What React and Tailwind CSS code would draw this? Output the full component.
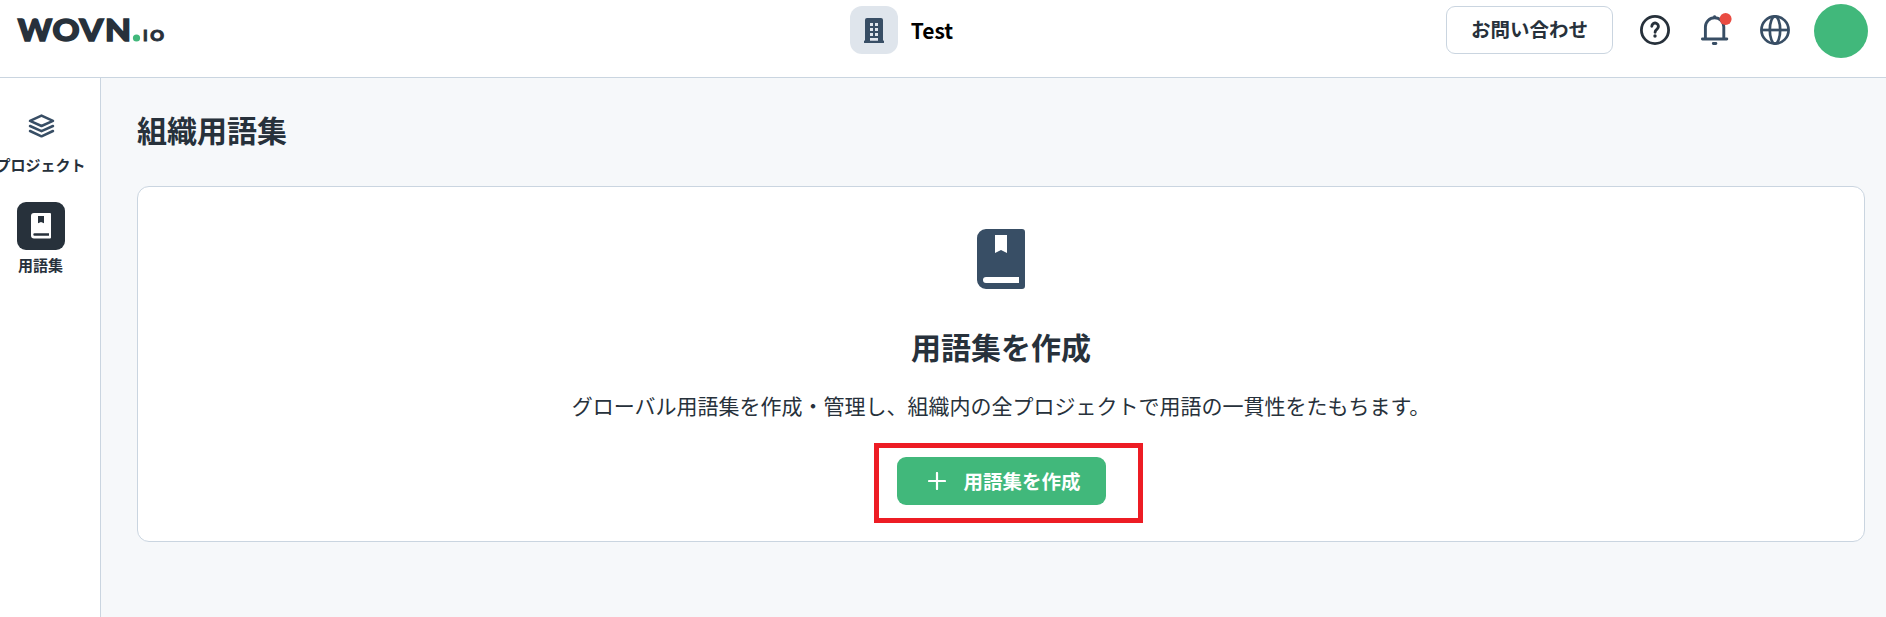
const cjk = 'font-["Noto_Sans_CJK_JP",sans-serif]'

function Logo() {
  return (
    <svg className="h-[60px] w-[170px] shrink-0" viewBox="0 0 170 60" fontFamily="Lato, sans-serif" fontWeight="900" fill="#27313b" stroke="#27313b">
      <g fontSize="30.3" strokeWidth="1.5">
        <text x="17.8" y="40.9" textLength="34.3" lengthAdjust="spacingAndGlyphs">W</text>
        <text x="52.4" y="40.9" textLength="27" lengthAdjust="spacingAndGlyphs">O</text>
        <text x="79.4" y="40.9" textLength="23.8" lengthAdjust="spacingAndGlyphs">V</text>
        <text x="105" y="40.9" textLength="26" lengthAdjust="spacingAndGlyphs">N</text>
      </g>
      <circle cx="136.5" cy="38" r="3.6" fill="#41b87b" stroke="none" />
      <g fontSize="15.5" strokeWidth="0.9">
        <text x="143.1" y="40.6">I</text>
        <text x="150.3" y="40.6" textLength="13.8" lengthAdjust="spacingAndGlyphs">O</text>
      </g>
    </svg>
  )
}

function BuildingIcon() {
  return (
    <svg className="h-[25px] w-5" viewBox="0 0 20 25" fill="#384e65">
      <path fillRule="evenodd" d="M3 0h14a2 2 0 0 1 2 2v20.5h.2a1.25 1.25 0 0 1 0 2.5H.8a1.25 1.25 0 0 1 0-2.5H1V2a2 2 0 0 1 2-2ZM6 5v3h3V5Zm5 0v3h3V5ZM6 10v3h3v-3Zm5 0v3h3v-3ZM6 15v3h3v-3Zm5 0v3h3v-3ZM6 20v2.7h8V20Z" />
    </svg>
  )
}

function HelpIcon() {
  return (
    <svg className="size-[30px]" viewBox="0 0 30 30" fill="none" stroke="#27313b" strokeLinecap="round" strokeLinejoin="round">
      <circle cx="15" cy="15" r="13.6" strokeWidth="2.8" />
      <path d="M11.8 11.3a3.3 3.3 0 1 1 5.3 2.7c-1.3 1-2 1.5-2 3.2" strokeWidth="2.9" />
      <circle cx="15" cy="21" r="1.7" fill="#27313b" stroke="none" />
    </svg>
  )
}

function BellIcon() {
  return (
    <svg className="h-[32px] w-[32px]" viewBox="0 0 32 32" fill="none" stroke="#384e65" strokeWidth="2.9" strokeLinecap="round">
      <path d="M2.4 26h24.4" />
      <path d="M5.4 25.5V14a9.2 9.2 0 0 1 18.4 0v11.5" />
      <path d="M14.6 3.6v1M13.3 30.5h2.6" />
      <circle cx="25.6" cy="6" r="6" fill="#e94b42" stroke="none" />
    </svg>
  )
}

function GlobeIcon() {
  return (
    <svg className="size-[30px]" viewBox="0 0 30 30" fill="none" stroke="#384e65" strokeWidth="2.7">
      <circle cx="15" cy="15" r="13.6" />
      <ellipse cx="15" cy="15" rx="5.2" ry="13.6" />
      <path d="M1 15h28" />
    </svg>
  )
}

function LayersIcon() {
  return (
    <svg className="h-[24px] w-[27px]" viewBox="0 0 27 24" fill="none" stroke="#384e65" strokeWidth="2.5" strokeLinejoin="round" strokeLinecap="round">
      <path d="M13.5 1.6 25 6.9 13.5 12 2 6.9Z" />
      <path d="M2 12 13.5 17.2 25 12M2 17 13.5 22.3 25 17" />
    </svg>
  )
}

function BookIcon({ className }) {
  return (
    <svg className={className} viewBox="0 0 48 60" fill="currentColor">
      <path fillRule="evenodd" d="M9 0h36a3 3 0 0 1 3 3v54a3 3 0 0 1-3 3H9a9 9 0 0 1-9-9V9a9 9 0 0 1 9-9ZM18 6v18l6-3 6 3V6ZM9 48a3 3 0 0 0 0 6h33v-6Z" />
    </svg>
  )
}

function SmallBookIcon() {
  return (
    <svg className="h-[26px] w-5" viewBox="0 0 20 26" fill="#fff">
      <path fillRule="evenodd" d="M3 0h16a1 1 0 0 1 1 1v23.5a1 1 0 0 1-1 1H3a3 3 0 0 1-3-3V3a3 3 0 0 1 3-3ZM7 3v7.3l3-1.4 3 1.4V3ZM3.5 20.3a1.2 1.2 0 0 0 0 2.4H18v-2.4Z" />
    </svg>
  )
}

function Header() {
  return (
    <header className="grid h-[78px] grid-cols-[1fr_auto_1fr] items-start border-b border-[#cad5e0] bg-white">
      <Logo />
      <div className="flex h-[60px] items-center gap-[13px] pr-[83px]">
        <div className="flex size-12 items-center justify-center rounded-xl bg-[#dfe5ec]">
          <BuildingIcon />
        </div>
        <span className="text-[21px] leading-8 font-bold text-black">Test</span>
      </div>
      <div className="flex h-[60px] items-center justify-end pr-[18px]">
        <button className="mr-[27px] h-12 w-[167px] rounded-[9px] border border-[#cad5e0] pb-0.5 text-[19.5px] font-bold">お問い合わせ</button>
        <div className="mr-[30px]"><HelpIcon /></div>
        <div className="mr-[28px] -mt-0.5"><BellIcon /></div>
        <div className="mr-6"><GlobeIcon /></div>
        <div className="mt-0.5 size-[54px] rounded-full bg-[#41b87b]" />
      </div>
    </header>
  )
}

function Sidebar() {
  return (
    <nav className="flex w-[101px] shrink-0 flex-col border-r border-[#cad5e0] bg-white pt-6 text-[15px] leading-[22px] font-bold">
      <div className="flex w-[81px] flex-col items-center">
        <div className="ml-px flex size-12 items-center justify-center">
          <LayersIcon />
        </div>
        <span className="mt-1 whitespace-nowrap">プロジェクト</span>
      </div>
      <div className="mt-[26px] flex w-[81px] flex-col items-center">
        <div className="ml-px flex size-12 items-center justify-center rounded-[9px] bg-[#27313b]">
          <SmallBookIcon />
        </div>
        <span className="mt-1">用語集</span>
      </div>
    </nav>
  )
}

export default function App() {
  return (
    <div className={`${cjk} flex h-screen flex-col overflow-hidden text-[#27313b]`}>
      <Header />
      <div className="flex flex-1">
        <Sidebar />
        <main className="flex-1 bg-[#f6f8fa] pt-[29px] pr-[21px] pl-9">
          <h1 className="text-[30px] leading-[45px] font-bold">組織用語集</h1>
          <section className="mt-[34px] flex h-[356px] flex-col items-center rounded-xl border border-[#cad5e0] bg-white pt-[42px]">
            <BookIcon className="h-[60px] w-12 text-[#384e65]" />
            <h2 className="mt-[35px] text-[30px] leading-[45px] font-bold">用語集を作成</h2>
            <p className="mt-5 text-[21px] leading-8">グローバル用語集を作成・管理し、組織内の全プロジェクトで用語の一貫性をたもちます。</p>
            <div className="relative mt-9">
              <button className="flex h-12 w-[209px] items-center rounded-[9px] bg-[#41b87b] pl-[31px] text-[19.5px] font-bold text-white">
                <svg className="mr-[18px] size-[18px]" viewBox="0 0 18 18" stroke="currentColor" strokeWidth="2.2" strokeLinecap="round">
                  <path d="M9 1v16M1 9h16" />
                </svg>
                用語集を作成
              </button>
              {/* highlight frame around the button */}
              <div className="pointer-events-none absolute -top-3.5 -left-[23px] h-20 w-[269px] border-5 border-[#ed1c24]" />
            </div>
          </section>
        </main>
      </div>
    </div>
  )
}
